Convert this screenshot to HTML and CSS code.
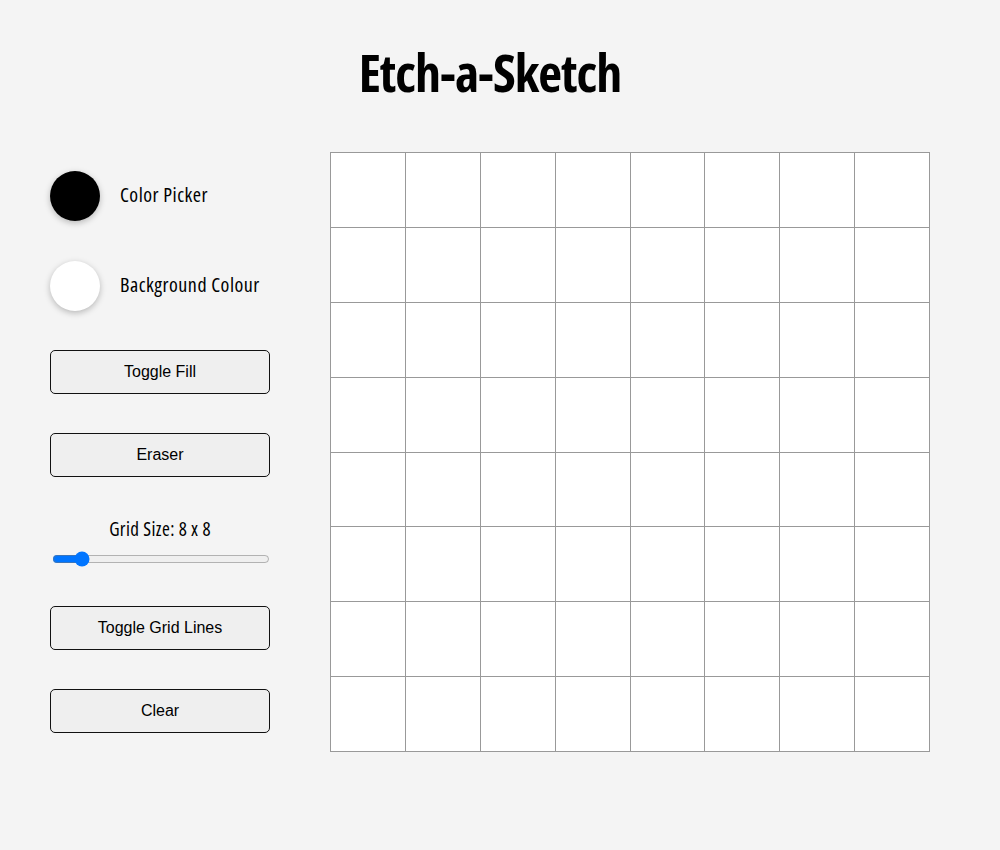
FILE: index.html
```html
<!DOCTYPE html>
<html lang="en">
<head>
<meta charset="utf-8">
<title>Etch-a-Sketch</title>
<link rel="stylesheet" href="styles.css">
</head>
<body>
<div class="page">
  <h1 class="title">Etch-a-Sketch</h1>
  <div class="main">
    <div class="sidebar">
      <div class="swatch-row">
        <div class="swatch swatch-black"></div>
        <span class="label">Color Picker</span>
      </div>
      <div class="swatch-row">
        <div class="swatch swatch-white"></div>
        <span class="label">Background Colour</span>
      </div>
      <button class="btn">Toggle Fill</button>
      <button class="btn">Eraser</button>
      <div class="size">
        <span class="size-label">Grid Size: 8 x 8</span>
        <input class="slider" type="range" min="1" max="64" value="8">
      </div>
      <button class="btn">Toggle Grid Lines</button>
      <button class="btn">Clear</button>
    </div>
    <div class="grid" id="grid"></div>
  </div>
</div>
<script>
  var g = document.getElementById('grid');
  for (var i = 0; i < 64; i++) {
    var c = document.createElement('div');
    c.className = 'cell';
    g.appendChild(c);
  }
</script>
</body>
</html>
```
FILE: styles.css
```css
html, body {
  margin: 0;
  padding: 0;
  background: #f4f4f4;
}
.page {
  width: 880px;
  padding: 0 0 0 50px;
  box-sizing: content-box;
}
.title {
  margin: 0;
  padding-top: 46px;
  height: 152px;
  box-sizing: border-box;
  text-align: center;
  font-family: "Open Sans", "DejaVu Sans", sans-serif;
  font-stretch: 75%;
  font-weight: bold;
  font-size: 52px;
  line-height: 52px;
  letter-spacing: -1px;
  color: #000;
}
.main {
  display: flex;
  gap: 60px;
  align-items: flex-start;
}
.sidebar {
  width: 220px;
  display: flex;
  flex-direction: column;
  padding-top: 19px;
}
.swatch-row {
  display: flex;
  align-items: center;
  gap: 20px;
  height: 50px;
  margin-bottom: 40px;
  white-space: nowrap;
}
.swatch-row + .swatch-row {
  margin-bottom: 39px;
}
.swatch {
  width: 50px;
  height: 50px;
  border-radius: 50%;
  box-shadow: 0 2px 6px rgba(0,0,0,0.25);
  flex: none;
}
.swatch-black { background: #000; }
.swatch-white { background: #fff; }
.label {
  font-family: "Open Sans", "DejaVu Sans", sans-serif;
  font-stretch: 80%;
  font-size: 20px;
  letter-spacing: 0.5px;
  line-height: 26px;
  margin-top: -2px;
  color: #000;
  white-space: nowrap;
}
.size-label {
  font-family: "Open Sans", "DejaVu Sans", sans-serif;
  font-stretch: 80%;
  font-size: 19px;
  letter-spacing: 0.4px;
  line-height: 22px;
  color: #000;
  white-space: nowrap;
}
.btn {
  width: 220px;
  height: 44px;
  margin: 0 0 39px 0;
  background: #efefef;
  border: 1px solid #111;
  border-radius: 5px;
  font-family: "Liberation Sans", Arial, sans-serif;
  font-size: 16px;
  color: #000;
  padding: 0;
}
.size {
  display: flex;
  flex-direction: column;
  align-items: center;
  margin: 2px 0 39px 0;
}
.slider {
  width: 218px;
  margin: 11px 0 0 2px;
  accent-color: #0075ff;
}
.grid {
  width: 600px;
  height: 600px;
  box-sizing: border-box;
  border: 1px solid #999;
  background: #999;
  display: grid;
  grid-template-columns: repeat(8, 1fr);
  grid-template-rows: repeat(8, 1fr);
  gap: 1px;
}
.cell {
  background: #fff;
}
```
